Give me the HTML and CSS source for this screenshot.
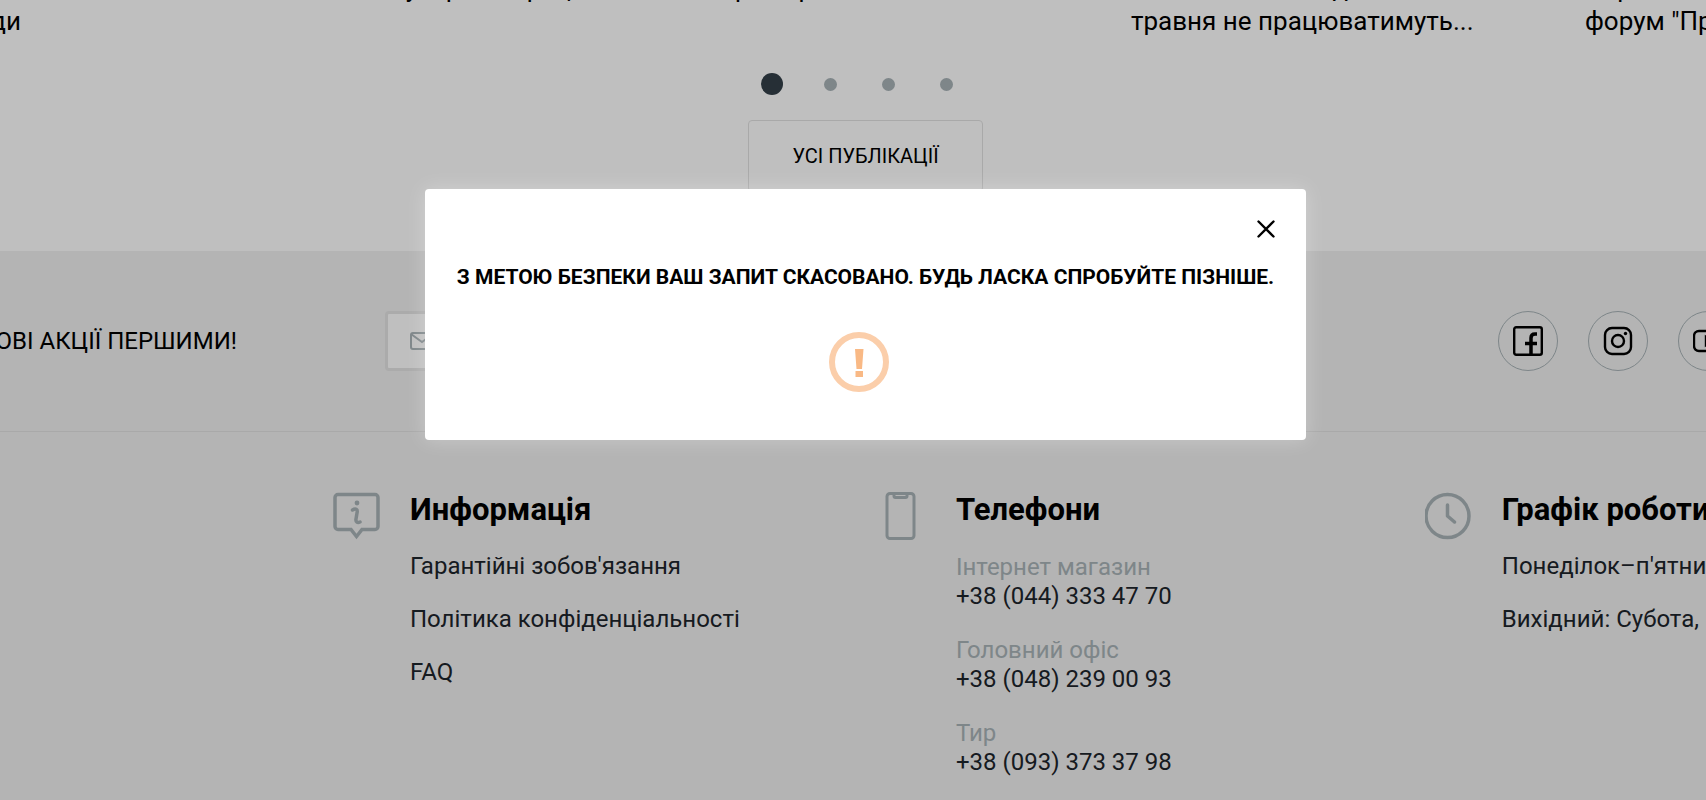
FILE: index.html
```
<!DOCTYPE html>
<html lang="uk">

<head>
  <meta charset="UTF-8" />
  <meta name="viewport" content="width=device-width, initial-scale=1.0"/>
  <title>Публікації</title>
  <link rel="stylesheet" href="styles.css">
</head>

<body>
  <div class="page">
    <section class="news">
      <div class="news-list">
        <a class="news-title news-title-end" href="#">Новини<br>заради</a>
        <a class="news-title" href="#">Новини тижня у офісах праця<br>&nbsp;</a>
        <a class="news-title" href="#">Товари сервісних магазинів<br>&nbsp;</a>
        <a class="news-title" href="#">Магазини 8 та 9 дня<br>травня не працюватимуть...</a>
        <a class="news-title" href="#">Перший<br>форум "Природа"</a>
      </div>
      <div class="dots">
        <button class="dot active" aria-label="1"></button>
        <button class="dot" aria-label="2"></button>
        <button class="dot" aria-label="3"></button>
        <button class="dot" aria-label="4"></button>
      </div>
      <a class="btn-all" href="#">УСІ ПУБЛІКАЦІЇ</a>
    </section>

    <section class="subscribe">
      <label class="subscribe-label" for="email">ДІЗНАВАЙТЕСЬ ПРО НОВІ АКЦІЇ ПЕРШИМИ!</label>
      <div class="subscribe-field">
        <svg width="24" height="18" viewBox="0 0 24 18" fill="none" stroke="#a8b3b7" stroke-width="2">
          <rect x="1" y="1" width="22" height="16" rx="2"/>
          <path d="M1 2l11 8 11-8"/>
        </svg>
        <input type="email" id="email">
      </div>
      <div class="social">
        <a href="#" aria-label="Facebook">
          <svg width="30" height="30" viewBox="0 0 30 30" fill="none" stroke="#000" stroke-width="2.400">
            <rect x="1.200" y="1.200" width="27.600" height="27.600" rx="2"/>
            <path d="M18 29V12q0-4 4-4h2M12 17.500h12" stroke-width="3.500"/>
          </svg>
        </a>
        <a href="#" aria-label="Instagram">
          <svg width="30" height="30" viewBox="0 0 30 30" fill="none" stroke="#000" stroke-width="2.400">
            <rect x="2" y="2" width="26" height="26" rx="7"/>
            <circle cx="15" cy="15" r="6"/>
            <circle cx="22.500" cy="7.500" r="1.700" fill="#000" stroke="none"/>
          </svg>
        </a>
        <a href="#" aria-label="YouTube">
          <svg width="30" height="30" viewBox="0 0 30 30" fill="none" stroke="#000" stroke-width="2.400">
            <rect x="1" y="5" width="28" height="20" rx="5"/>
            <path d="M13 11v8l6-4z"/>
          </svg>
        </a>
      </div>
    </section>

    <footer class="footer">
      <div class="footer-col">
        <svg class="footer-icon" viewBox="0 0 48 48" fill="none" stroke="#a8b3b7" stroke-width="3.500">
          <path d="M5 2.500h37a3 3 0 0 1 3 3v29a3 3 0 0 1-3 3H29l-5.500 7L18 37.500H5a3 3 0 0 1-3-3v-29a3 3 0 0 1 3-3z"/>
          <circle cx="24" cy="11" r="2.400" fill="#a8b3b7" stroke="none"/>
          <path d="M19.500 18c3-2 5.500-1 4.500 3l-1 6c-.5 3 1.500 4 4 3" stroke-linecap="round"/>
        </svg>
        <div class="footer-body">
          <h3>Информація</h3>
          <ul>
            <li><a href="#">Гарантійні зобов'язання</a></li>
            <li><a href="#">Політика конфіденціальності</a></li>
            <li><a href="#">FAQ</a></li>
          </ul>
        </div>
      </div>
      <div class="footer-col">
        <svg class="footer-icon" viewBox="0 0 48 48" fill="none" stroke="#a8b3b7" stroke-width="3">
          <rect x="8" y="1.500" width="27" height="45" rx="3"/>
          <path d="M15 2v2q0 1.500 1.500 1.500h10q1.500 0 1.500-1.500V2"/>
        </svg>
        <div class="footer-body">
          <h3>Телефони</h3>
          <dl>
            <dt>Інтернет магазин</dt>
            <dd><a href="tel:+380443334770">+38 (044) 333 47 70</a></dd>
            <dt>Головний офіс</dt>
            <dd><a href="tel:+380482390093">+38 (048) 239 00 93</a></dd>
            <dt>Тир</dt>
            <dd><a href="tel:+380933733798">+38 (093) 373 37 98</a></dd>
          </dl>
        </div>
      </div>
      <div class="footer-col">
        <svg class="footer-icon" viewBox="0 0 48 48" fill="none" stroke="#a8b3b7" stroke-width="3.500">
          <circle cx="22.500" cy="24" r="21.500"/>
          <path d="M22.500 13v11l7 6" stroke-linecap="round" stroke-linejoin="round"/>
        </svg>
        <div class="footer-body">
          <h3>Графік роботи</h3>
          <ul>
            <li>Понеділок–п'ятниця</li>
            <li>Вихідний: Субота, Неділя</li>
          </ul>
        </div>
      </div>
    </footer>

    <div class="overlay">
      <div class="modal" role="dialog" aria-modal="true">
        <button class="modal-close" aria-label="Закрити">
          <svg width="18" height="18" viewBox="0 0 18 18" fill="none" stroke="#000" stroke-width="2.400" stroke-linecap="round">
            <path d="M1.500 1.500l15 15M16.500 1.500l-15 15"/>
          </svg>
        </button>
        <p class="modal-text">З МЕТОЮ БЕЗПЕКИ ВАШ ЗАПИТ СКАСОВАНО. БУДЬ ЛАСКА СПРОБУЙТЕ ПІЗНІШЕ.</p>
        <svg class="modal-icon" viewBox="0 0 60 60">
          <circle cx="30" cy="30" r="27" fill="none" stroke="#fbceaa" stroke-width="6"/>
          <path d="M26 17h8.500l-1.500 20h-5.500zM26.500 39h7.500v6h-7.500z" fill="#f9b985"/>
        </svg>
      </div>
    </div>
  </div>
</body>
</html>
```
FILE: styles.css
```
* {
  box-sizing: border-box;
}

body {
  margin: 0;
  overflow: hidden;
  font-family: Roboto, 'Noto Sans', sans-serif;
  font-size: 24px;
  color: #000;
  background-color: #f0f0f0;
}

a {
  color: inherit;
  text-decoration: none;
}

/* the page is a little wider than the window */
.page {
  position: relative;
  min-height: 100vh;
  margin-right: -25px;
  overflow: hidden;
}

.news {
  display: flex;
  flex-direction: column;
  align-items: center;
  height: 251px;
  background-color: #fff;
}

.news-list {
  display: flex;
  align-self: flex-start;
  flex: none;
  gap: 54px;
  height: 64px;
  margin-left: -231px;
  align-items: flex-end;
  padding-bottom: 26px;
}

.news-title {
  flex: none;
  width: 400px;
  font-size: 26px;
  line-height: 33px;
  white-space: nowrap;
}

.news-title-end {
  width: 252px;
  margin-right: 148px;
  text-align: right;
}

.dots {
  display: flex;
  align-items: center;
  gap: 45px;
  height: 40px;
  margin-right: 18px;
}

.dot {
  width: 13px;
  height: 13px;
  padding: 0;
  border: none;
  border-radius: 50%;
  background-color: #a8b3b7;
  cursor: pointer;
}

.dot.active {
  width: 22px;
  height: 22px;
  margin-right: -4px;
  background-color: #333f48;
}

.btn-all {
  width: 235px;
  margin-top: 16px;
  border: 1px solid #e2e2e2;
  border-radius: 4px;
  font-size: 20px;
  line-height: 70px;
  text-align: center;
}

.subscribe {
  display: flex;
  align-items: center;
  height: 181px;
  border-bottom: 1px solid #e2e2e2;
}

.subscribe-label {
  display: flex;
  justify-content: flex-end;
  flex: none;
  width: 237px;
  white-space: nowrap;
}

.subscribe-field {
  display: flex;
  align-items: center;
  flex: 1;
  max-width: 800px;
  height: 60px;
  margin-left: 148px;
  padding: 0 22px;
  gap: 16px;
  border: 3px solid #e4e4e4;
  border-radius: 4px;
  background-color: #fff;
}

.subscribe-field input {
  flex: 1;
  border: none;
  font: inherit;
  background: none;
}

.social {
  display: flex;
  gap: 30px;
  margin-left: auto;
  margin-right: -7px;
}

.social a {
  display: flex;
  align-items: center;
  justify-content: center;
  width: 60px;
  height: 60px;
  border: 1px solid #a8b3b7;
  border-radius: 50%;
}

.footer {
  display: grid;
  grid-template-columns: repeat(3, 32vw);
  padding: 60px 0 0 333px;
  color: #1c242b;
}

.footer-col {
  display: flex;
  gap: 29px;
}

.footer-icon {
  flex: none;
  width: 48px;
  height: 48px;
}

.footer-body {
  white-space: nowrap;
}

.footer h3 {
  margin: 0 0 24px;
  font-size: 31px;
  line-height: 36px;
  color: #000;
}

.footer ul {
  margin: 0;
  padding: 0;
  list-style: none;
}

.footer li {
  margin-bottom: 24px;
  line-height: 29px;
}

.footer dl {
  margin: 0;
  padding-top: 1px;
  line-height: 29px;
}

.footer dt {
  color: #a8b3b7;
}

.footer dd {
  margin: 0 0 25px;
}

.overlay {
  position: absolute;
  inset: 0;
  display: flex;
  justify-content: center;
  align-items: flex-start;
  padding-top: 189px;
  background-color: rgba(0, 0, 0, 0.25);
}

.modal {
  display: flex;
  flex-direction: column;
  align-items: center;
  width: 881px;
  padding: 30px 30px 48px;
  border-radius: 4px;
  background-color: #fff;
  box-shadow: 0 0 20px rgba(255, 255, 255, 0.3);
}

.modal-close {
  display: flex;
  align-self: flex-end;
  padding: 1px;
  border: none;
  background: none;
  cursor: pointer;
}

.modal-text {
  margin: 24px 0 41px;
  font-size: 21px;
  font-weight: bold;
  line-height: 28px;
  white-space: nowrap;
}

.modal-icon {
  width: 60px;
  height: 60px;
  margin-right: 14px;
}
```
